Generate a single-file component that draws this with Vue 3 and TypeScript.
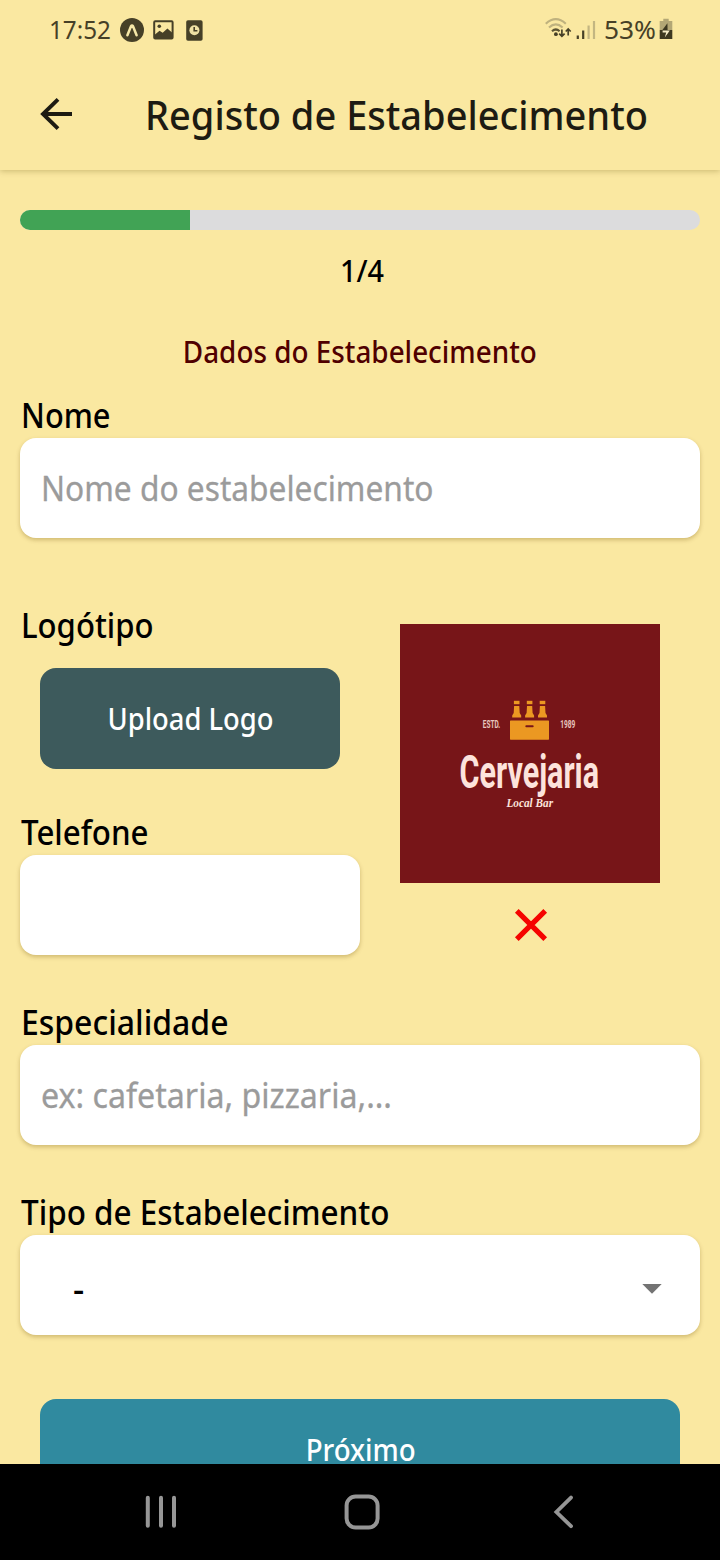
<script setup lang="ts">
import { ref } from 'vue'
import type { Directive } from 'vue'

// Condenses a line of text horizontally to the given width in pixels.
const vFit: Directive<HTMLElement, number> = {
  mounted(el, { value }) {
    const natural = el.getBoundingClientRect().width
    if (natural > 0) el.style.transform = `scaleX(${value / natural})`
  },
}

const step = ref(1)
const totalSteps = 4
</script>

<template>
  <div class="screen">
    <div class="status">
      <div class="status-left">
        <span class="clock"><span v-fit="62" class="fit">17:52</span></span>
        <svg class="i-expo" width="24" height="24" viewBox="0 0 24 24">
          <circle cx="12" cy="12" r="12" fill="#464027" />
          <path d="M7.4 17.3 L11 8.2 Q12 6.6 13 8.2 L16.6 17.3" fill="none" stroke="#f6e8a8" stroke-width="2.5" stroke-linecap="round" stroke-linejoin="round" />
        </svg>
        <svg class="i-image" width="21" height="20" viewBox="0 0 21 20">
          <rect x="1.2" y="1.2" width="18.4" height="17.4" rx="1" fill="none" stroke="#464027" stroke-width="2" />
          <circle cx="6.3" cy="6.2" r="1.8" fill="#464027" />
          <path d="M2 14.5 L6.5 10.8 L9.7 12.8 L14.4 8.4 L19 12.4 V18 H2 Z" fill="#464027" />
        </svg>
        <svg class="i-doc" width="17" height="21" viewBox="0 0 17 21">
          <rect x="0.2" y="0.2" width="16.4" height="20.6" rx="1.8" fill="#464027" />
          <circle cx="8.4" cy="10.2" r="5" fill="#efe1a4" />
          <path d="M8.2 7 V10.7 H11.4" fill="none" stroke="#464027" stroke-width="1.6" />
        </svg>
      </div>
      <div class="status-right">
        <svg class="i-wifi" width="28" height="24" viewBox="0 0 28 24">
          <g fill="none" stroke-width="2.2">
            <path d="M0.8 6.7 Q10.8 -2.4 20.8 6.7" stroke="#bfb27e" />
            <path d="M4 10.5 Q10.8 4.4 17.6 10.5" stroke="#bfb27e" />
            <path d="M7 14.2 Q10.8 10.8 14.6 14.2" stroke="#5c5433" />
          </g>
          <circle cx="10.9" cy="17.2" r="1.9" fill="#464027" />
          <path d="M16.9 12.6 V19 M14.2 16.6 L16.9 19.3 L19.6 16.6" fill="none" stroke="#464027" stroke-width="1.7" />
          <path d="M23.2 18.4 V12 M20.7 14.5 L23.2 12 L25.7 14.5" fill="none" stroke="#464027" stroke-width="1.7" />
        </svg>
        <svg class="i-signal" width="20" height="20" viewBox="0 0 20 20">
          <path d="M1.8 15.5 V19 M7.2 10.5 V19" stroke="#464027" stroke-width="2.2" />
          <path d="M12.6 5.5 V19 M18 1 V19" stroke="#c3b681" stroke-width="2.2" />
        </svg>
        <span class="pct"><span v-fit="52" class="fit">53%</span></span>
        <svg class="i-batt" width="14" height="22" viewBox="0 0 14 22">
          <path d="M4.3 0.8 H9.7 V3 H13.3 V12 H0.7 V3 H4.3 Z" fill="#b3a775" />
          <path d="M0.7 12 H13.3 V21 H0.7 Z" fill="#3d3820" />
          <path d="M8.4 5.2 L3.4 12 H8.6 Z" fill="#3d3820" />
          <path d="M3.6 12.4 H10.8 L5.8 19.4 L7.2 14.4 H3.6 Z" fill="#f6edc8" />
        </svg>
      </div>
    </div>

    <header class="header">
      <svg class="i-back" width="34" height="34" viewBox="0 0 34 34">
        <path d="M33 17 H4 M19 2.4 L4 17 L19 31.6" fill="none" stroke="#1d1b12" stroke-width="3.9" />
      </svg>
      <h1 class="title"><span v-fit="503" class="fit">Registo de Estabelecimento</span></h1>
    </header>

    <main class="content">
      <div class="progress">
        <div class="bar" :style="{ width: `${(step / totalSteps) * 100}%` }"></div>
      </div>
      <p class="counter"><span v-fit="44" class="fit mid">{{ step }}/{{ totalSteps }}</span></p>
      <h2 class="section"><span v-fit="354" class="fit mid">Dados do Estabelecimento</span></h2>

      <div class="field">
        <div class="label"><span v-fit="89.5" class="fit">Nome</span></div>
        <div class="input"><span v-fit="392.5" class="fit hint">Nome do estabelecimento</span></div>
      </div>

      <div class="row">
        <div class="col">
          <div class="label logo-label"><span v-fit="132.5" class="fit">Logótipo</span></div>
          <div class="upload"><span v-fit="166" class="fit mid">Upload Logo</span></div>
          <div class="label"><span v-fit="127.5" class="fit">Telefone</span></div>
          <div class="input"></div>
        </div>
        <div class="preview">
          <svg class="logo" width="260" height="259" viewBox="0 0 260 259">
            <rect width="260" height="259" fill="#771518" />
            <g fill="#eb9822">
              <g v-for="x in [116.7, 129.6, 142.5]" :key="x" :transform="`translate(${x} 0)`">
                <rect x="-2.8" y="76.8" width="5.6" height="3.4" />
                <path d="M-2.6 82 H2.6 L3 89 L4.5 91.6 V93.6 H-4.5 V91.6 L-3 89 Z" />
              </g>
              <rect x="110" y="96.4" width="39" height="19.3" rx="0.6" />
            </g>
            <rect x="125.3" y="101.2" width="8.4" height="2" rx="1" fill="#771518" />
            <g class="logo-text">
              <text x="82.8" y="104" font-size="11" textLength="17.4" lengthAdjust="spacingAndGlyphs" opacity="0.85">ESTD.</text>
              <text x="160.2" y="104" font-size="11" textLength="15" lengthAdjust="spacingAndGlyphs" opacity="0.85">1989</text>
              <text class="brand" x="59.5" y="164" font-size="47" textLength="139.5" lengthAdjust="spacingAndGlyphs">Cervejaria</text>
            </g>
            <text class="script" x="106.5" y="183" font-size="12.5" textLength="46.5" lengthAdjust="spacingAndGlyphs">Local Bar</text>
          </svg>
          <svg class="remove" width="34" height="34" viewBox="0 0 34 34">
            <path d="M2.8 2.8 L31.2 31.2 M31.2 2.8 L2.8 31.2" stroke="#f50400" stroke-width="5.2" />
          </svg>
        </div>
      </div>

      <div class="field gap">
        <div class="label"><span v-fit="207.5" class="fit">Especialidade</span></div>
        <div class="input"><span v-fit="351" class="fit hint">ex: cafetaria, pizzaria,...</span></div>
      </div>

      <div class="field gap">
        <div class="label"><span v-fit="368.5" class="fit">Tipo de Estabelecimento</span></div>
        <div class="input select">
          <span class="value">-</span>
          <svg width="20" height="10" viewBox="0 0 20 10"><path d="M0.3 0 H19.7 L10 9.8 Z" fill="#737373" /></svg>
        </div>
      </div>

      <div class="next"><span v-fit="110" class="fit mid">Próximo</span></div>
    </main>

    <nav class="nav">
      <svg width="32" height="34" viewBox="0 0 32 34">
        <path d="M2.8 2.8 V30.8 M16 2.8 V30.8 M29 2.8 V30.8" stroke="#969696" stroke-width="4" stroke-linecap="round" />
      </svg>
      <svg class="home" width="36" height="36" viewBox="0 0 36 36">
        <rect x="2.6" y="2.5" width="31" height="31" rx="9" fill="none" stroke="#969696" stroke-width="4" />
      </svg>
      <svg class="back" width="20" height="34" viewBox="0 0 20 34">
        <path d="M18 2.6 L3.4 17 L18 31.2" fill="none" stroke="#969696" stroke-width="3.8" stroke-linecap="round" />
      </svg>
    </nav>
  </div>
</template>

<style>
body {
  margin: 0;
  background: #fae8a1;
}
</style>

<style scoped>
.screen {
  width: 720px;
  height: 1560px;
  display: flex;
  flex-direction: column;
  overflow: hidden;
  background: #fae8a1;
  color: #000;
  font-family: 'Noto Sans', 'Open Sans', sans-serif;
  font-weight: 500;
}
svg {
  display: block;
  flex: none;
}
.fit {
  display: inline-block;
  white-space: nowrap;
  transform-origin: left center;
}
.fit.mid {
  transform-origin: center;
}
.status {
  height: 58px;
  flex: none;
  display: flex;
  justify-content: space-between;
  padding: 0 47px 0 49px;
  color: #464027;
  font-size: 26px;
  line-height: 58px;
  font-weight: 400;
}
.status-left,
.status-right {
  display: flex;
  align-items: center;
}
.clock {
  width: 71px;
}
.i-expo {
  margin-top: 1px;
}
.i-image {
  margin-left: 9px;
  margin-top: 1px;
}
.i-doc {
  margin-left: 12px;
  margin-top: 2px;
}
.i-signal {
  margin-left: 3px;
  margin-top: 2px;
}
.pct {
  width: 52px;
  margin-left: 8px;
  margin-right: 3px;
}
.header {
  height: 112px;
  flex: none;
  display: flex;
  align-items: center;
  padding-left: 39px;
  box-shadow: 0 1px 6px rgba(90, 70, 0, 0.3);
  clip-path: inset(0 0 -12px 0);
}
.title {
  margin: 2px 0 0 71.5px;
  font-size: 40px;
  line-height: 60px;
  font-weight: 500;
  color: #1d1b12;
}
.content {
  height: 1294px;
  flex: none;
  box-sizing: border-box;
  padding: 40px 20px 0;
  overflow: hidden;
}
.progress {
  height: 20px;
  border-radius: 10px;
  overflow: hidden;
  background: #dcdcdd;
}
.bar {
  height: 100%;
  background: #41a355;
}
.counter {
  margin: 21px 0 0 3px;
  height: 40px;
  font-size: 30px;
  line-height: 40px;
  text-align: center;
}
.section {
  margin: 40px 0 0;
  height: 40px;
  font-size: 30.5px;
  line-height: 40px;
  font-weight: 500;
  text-align: center;
  color: #500000;
}
.field {
  margin-top: 20px;
}
.field.gap {
  margin-top: 43px;
}
.label {
  height: 47px;
  padding-left: 0.8px;
  font-size: 35px;
  line-height: 47px;
}
.input {
  height: 100px;
  box-sizing: border-box;
  padding-left: 20.8px;
  border-radius: 16px;
  background: #fff;
  box-shadow: 0 2px 4px rgba(110, 75, 0, 0.3);
  font-size: 35px;
  line-height: 100px;
}
.hint {
  color: #9b9b9b;
  font-weight: 400;
  -webkit-text-stroke: 0.3px #9b9b9b;
}
.row {
  display: flex;
  margin-top: 63px;
}
.col {
  width: 340px;
}
.upload {
  width: 300px;
  height: 101px;
  box-sizing: border-box;
  padding-left: 2px;
  margin: 20px 0 39px 20px;
  border-radius: 16px;
  background: #3d5a5c;
  color: #fff;
  font-size: 30.5px;
  line-height: 101px;
  text-align: center;
}
.preview {
  width: 260px;
  margin: 23px 0 0 40px;
}
.remove {
  margin: 25px auto 0 114px;
}
.logo-text {
  fill: #fde3dc;
  font-family: Roboto, sans-serif;
  font-weight: 700;
}
.script {
  fill: #fde3dc;
  font-family: 'Liberation Serif', serif;
  font-style: italic;
  font-weight: 700;
}
.select {
  display: flex;
  align-items: center;
  justify-content: space-between;
  padding: 0 38px 0 53px;
}
.select svg {
  margin-top: 8px;
}
.value {
  margin-top: 8px;
  line-height: 100px;
  font-size: 35px;
}
.next {
  height: 100px;
  box-sizing: border-box;
  padding-left: 2px;
  margin: 64px 20px 0;
  border-radius: 16px;
  background: #308a9f;
  color: #fff;
  font-size: 30.5px;
  line-height: 101px;
  text-align: center;
}
.nav {
  height: 96px;
  flex: none;
  display: flex;
  align-items: center;
  padding-left: 145px;
  background: #000;
}
.home {
  margin-left: 167px;
}
.back {
  margin-left: 173px;
}
</style>
